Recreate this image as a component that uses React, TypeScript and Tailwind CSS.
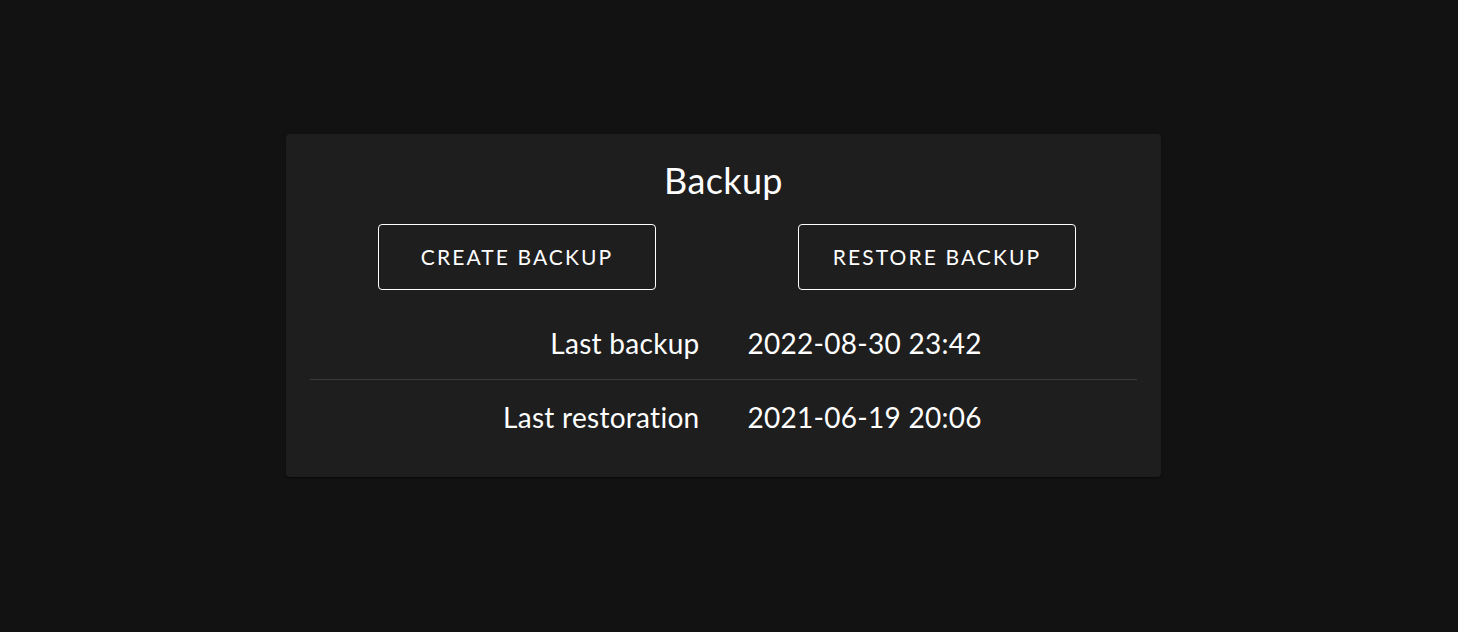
export default function App() {
  const rows = [
    ["Last backup", "2022-08-30 23:42"],
    ["Last restoration", "2021-06-19 20:06"],
  ];
  return (
    <div
      className="min-h-screen w-full bg-[#121212] text-white pt-[134px]"
      style={{ fontFamily: "Lato, 'Noto Sans', sans-serif" }}
    >
      <div className="ml-[286px] w-[875px] rounded-[4px] bg-[#1e1e1e] px-[24px] pt-[24px] pb-[24px] shadow-[0_2px_1px_-1px_rgba(0,0,0,0.2),0_1px_1px_0_rgba(0,0,0,0.14),0_1px_3px_0_rgba(0,0,0,0.12)]">
        <h1 className="text-center text-[36px] leading-[44px] font-normal tracking-[0.01em]">Backup</h1>
        <div className="mt-[22px] flex gap-[142px] pl-[68px]">
          <button className="h-[66px] w-[278px] rounded-[4px] border border-white text-[21px] tracking-[0.1em] uppercase">
            Create Backup
          </button>
          <button className="h-[66px] w-[278px] rounded-[4px] border border-white text-[21px] tracking-[0.1em] uppercase">
            Restore Backup
          </button>
        </div>
        <div className="mt-[17px]">
          {rows.map(([k, v], i) => (
            <div
              key={k}
              className={`grid grid-cols-2 h-[73px] items-center text-[28px] tracking-[0.01em] ${i === 0 ? "border-b border-[#3a3a3a]" : ""}`}
            >
              <div className="pr-[24px] text-right">{k}</div>
              <div className="pl-[24px] text-left">{v}</div>
            </div>
          ))}
        </div>
      </div>
    </div>
  );
}
